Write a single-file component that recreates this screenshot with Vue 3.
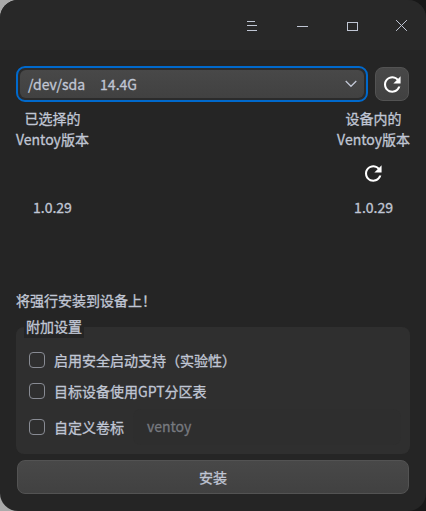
<script setup>
import { ref } from 'vue'

const device = ref('/dev/sda')
const capacity = ref('14.4G')
const secureBoot = ref(false)
const gpt = ref(false)
const customLabel = ref(false)
const reloadPath = 'M17.65 6.35C16.2 4.9 14.21 4 12 4c-4.42 0-7.99 3.58-7.99 8s3.57 8 7.99 8c3.73 0 6.84-2.55 7.73-6h-2.08c-.82 2.33-3.04 4-5.65 4-3.31 0-6-2.69-6-6s2.69-6 6-6c1.66 0 3.14.69 4.22 1.78L13 11h7V4l-2.35 2.35z'
</script>

<template>
  <div class="desktop">
    <main class="window">
      <header class="titlebar">
        <button class="ctl" aria-label="menu">
          <svg width="12" height="12" viewBox="0 0 12 12" shape-rendering="crispEdges"><path d="M1 1.5h8M1 5.5h10M1 10.5h10" /></svg>
        </button>
        <button class="ctl" aria-label="minimize">
          <svg width="12" height="12" viewBox="0 0 12 12" shape-rendering="crispEdges"><path d="M1 6.5h11" /></svg>
        </button>
        <button class="ctl" aria-label="maximize">
          <svg width="12" height="12" viewBox="0 0 12 12" shape-rendering="crispEdges"><path d="M1.5 2.5h10v8h-10z" /></svg>
        </button>
        <button class="ctl" aria-label="close">
          <svg width="12" height="12" viewBox="0 0 12 12"><path d="M.1 .1l10.8 10.8M10.9 .1l-10.8 10.8" /></svg>
        </button>
      </header>

      <section class="device-row">
        <div class="combo">
          <div class="combo-inner">
            <span class="device">{{ device }}</span>
            <span class="capacity">{{ capacity }}</span>
            <svg class="chevron" width="12" height="8" viewBox="0 0 12 8"><path d="M.7 1l5.3 5.3L11.3 1" /></svg>
          </div>
        </div>
        <button class="refresh" aria-label="refresh">
          <svg class="reload" width="17" height="17" viewBox="4 3.8 16.4 16.4"><path :d="reloadPath" /></svg>
        </button>
      </section>

      <section class="versions">
        <div class="version">
          <div>已选择的<br>Ventoy版本</div>
          <div class="slot"></div>
          <div>1.0.29</div>
        </div>
        <div class="version">
          <div>设备内的<br>Ventoy版本</div>
          <div class="slot">
            <svg class="reload" width="17" height="17" viewBox="4 3.8 16.4 16.4"><path :d="reloadPath" /></svg>
          </div>
          <div>1.0.29</div>
        </div>
      </section>

      <p class="status">将强行安装到设备上！</p>

      <section class="group">
        <h2 class="legend">附加设置</h2>
        <label class="option"><input v-model="secureBoot" type="checkbox">启用安全启动支持（实验性）</label>
        <label class="option second"><input v-model="gpt" type="checkbox">目标设备使用GPT分区表</label>
        <div class="third">
          <label class="option"><input v-model="customLabel" type="checkbox">自定义卷标</label>
          <div class="field">ventoy</div>
        </div>
      </section>

      <button class="install">安装</button>
    </main>
  </div>
</template>

<style>
body {
  margin: 0;
}
</style>

<style scoped>
.desktop {
  width: 426px;
  height: 511px;
  overflow: hidden;
  background: linear-gradient(90deg, #aaa 0 50%, #181818 50%);
}
.window {
  box-sizing: border-box;
  display: flex;
  flex-direction: column;
  height: 511px;
  border-radius: 18px;
  background: #252525;
  color: #c0c6d4;
  font: 14px/21px "Noto Sans CJK SC", sans-serif;
  -webkit-text-stroke: 0.3px currentColor;
  overflow: hidden;
}
button {
  font: inherit;
  color: inherit;
  padding: 0;
  display: flex;
  align-items: center;
  justify-content: center;
}
svg {
  display: block;
  fill: none;
  stroke: #c0c6d4;
}
.titlebar {
  box-sizing: border-box;
  display: flex;
  justify-content: flex-end;
  height: 50px;
  flex: none;
  background: #282828;
}
.ctl {
  box-sizing: border-box;
  width: 50px;
  height: 52px;
  padding-left: 2px;
  border: 0;
  background: none;
}
.device-row {
  display: flex;
  gap: 7px;
  padding: 16px 17px 0 16px;
}
.combo {
  box-sizing: border-box;
  flex: 1;
  height: 36px;
  padding: 2px;
  border: 2px solid #0069cc;
  border-radius: 9px;
  background: #2b2b2b;
}
.combo-inner {
  box-sizing: border-box;
  display: flex;
  align-items: center;
  height: 28px;
  padding: 0 7px 0 8px;
  border-radius: 6px;
  background: linear-gradient(#484848, #414141);
  line-height: 20px;
}
.capacity {
  margin-left: 15px;
}
.chevron {
  margin-left: auto;
  stroke-width: 1.3;
}
.refresh {
  box-sizing: border-box;
  width: 34px;
  height: 34px;
  margin-top: 1px;
  border: 1px solid #535353;
  border-radius: 8px;
  background: linear-gradient(#484848, #414141);
}
.reload {
  fill: #fff;
  stroke: none;
}
.versions {
  display: flex;
  justify-content: space-between;
  padding: 5.5px 16px 0;
  text-align: center;
}
.slot {
  display: flex;
  align-items: center;
  justify-content: center;
  height: 47px;
}
.status {
  margin: 72px 16px 0;
}
.group {
  box-sizing: border-box;
  display: flex;
  flex-direction: column;
  height: 127px;
  margin: 16.5px 16px 0;
  padding: 0 9px 0 13px;
  border-radius: 8px;
  background: #2f2f2f;
}
.legend {
  align-self: flex-start;
  height: 22px;
  margin: -11px 0 0 -5px;
  padding: 0 2px;
  background: #252525;
  font: inherit;
}
.option {
  display: flex;
  align-items: center;
  height: 20px;
  line-height: 20px;
}
.legend + .option {
  margin-top: 12px;
}
.second {
  margin-top: 11px;
}
.third {
  display: flex;
  align-items: center;
  height: 36px;
  margin-top: 8px;
}
input {
  appearance: none;
  box-sizing: border-box;
  width: 16px;
  height: 16px;
  margin: 0 9px 0 0;
  border: 1px solid #888b93;
  border-radius: 4px;
}
.field {
  box-sizing: border-box;
  flex: 1;
  height: 36px;
  margin-left: 9px;
  padding: 7px 14px 0;
  border-radius: 8px;
  background: #2e2e2e;
  color: #77797f;
}
.install {
  box-sizing: border-box;
  height: 34px;
  margin: 6px 17px 0;
  border: 1px solid #535353;
  border-radius: 8px;
  background: linear-gradient(#484848, #414141);
}
</style>
